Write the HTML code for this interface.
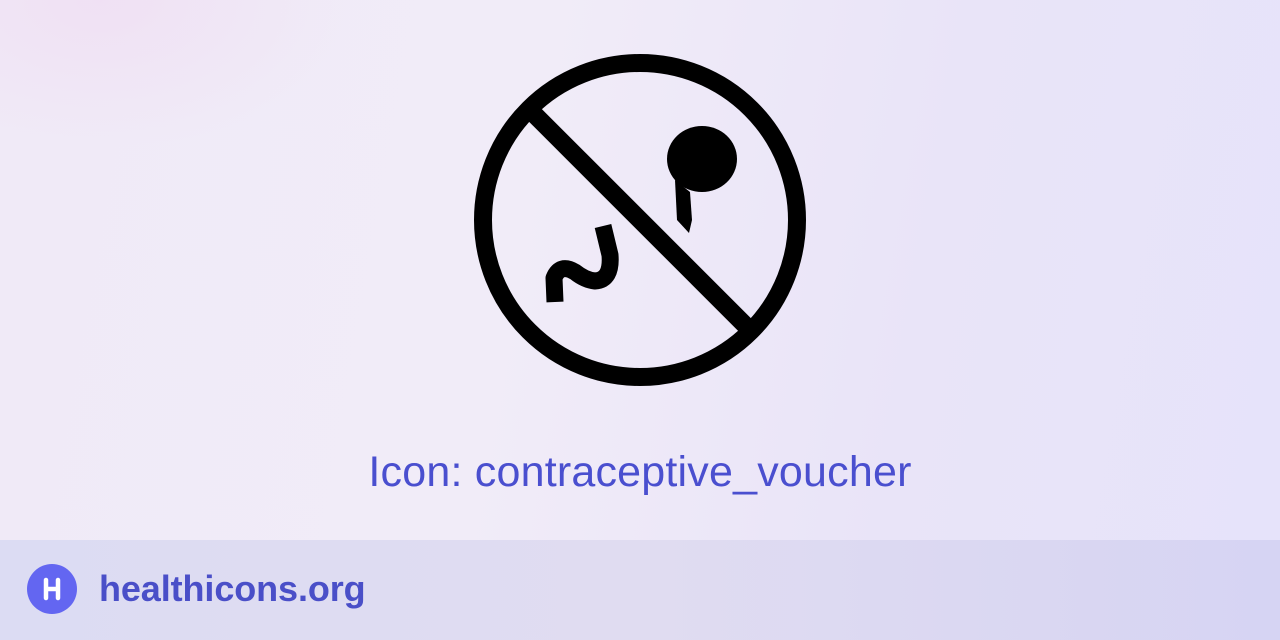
<!DOCTYPE html>
<html><head><style>
html,body{margin:0;padding:0;width:1280px;height:640px;overflow:hidden}
body{position:relative;background:linear-gradient(100deg,#f0eaf7 0%,#f1ecf8 40%,#e9e4f8 70%,#e6e3fa 100%);font-family:"Liberation Sans",sans-serif}
.glow{position:absolute;left:-150px;top:-150px;width:500px;height:300px;background:radial-gradient(ellipse at center,rgba(240,215,240,.5),rgba(240,215,240,0) 70%)}
.title{position:absolute;left:0;width:1280px;top:448px;text-align:center;font-size:43px;color:#4a4fcf;letter-spacing:0.2px}
.footer{position:absolute;left:0;top:540px;width:1280px;height:100px;background:linear-gradient(90deg,#dcdcf3,#e0dcf1 50%,#d6d4f3)}
.logo{position:absolute;left:27px;top:24px;width:50px;height:50px;border-radius:50%;background:#6366f1}
.brand{position:absolute;left:99px;top:28px;font-size:36px;font-weight:bold;color:#4a4fc8;letter-spacing:-0.1px}
</style></head><body>
<div class="glow"></div>
<svg width="1280" height="540" style="position:absolute;left:0;top:0">
<circle cx="640" cy="220" r="157" fill="none" stroke="#000" stroke-width="18"/>
<line x1="533" y1="113" x2="748" y2="328" stroke="#000" stroke-width="18"/>
<ellipse cx="702" cy="159" rx="35" ry="33" fill="#000"/>
<path d="M675 180 L690 192 L692 220 L689 233 L677 220 Z" fill="#000"/>
<path d="M603 226 L610 255 Q612 280 595 281 Q585 280 575 272 Q560 263 554 278 L555 302" fill="none" stroke="#000" stroke-width="17" stroke-linejoin="round"/>
</svg>
<div class="title">Icon: contraceptive_voucher</div>
<div class="footer">
<div class="logo"><svg width="50" height="50"><path d="M19 16V34M31 16V34M19 25H31" stroke="#fff" stroke-width="4.5" stroke-linecap="round" fill="none"/></svg></div>
<div class="brand">healthicons.org</div>
</div>
</body></html>
